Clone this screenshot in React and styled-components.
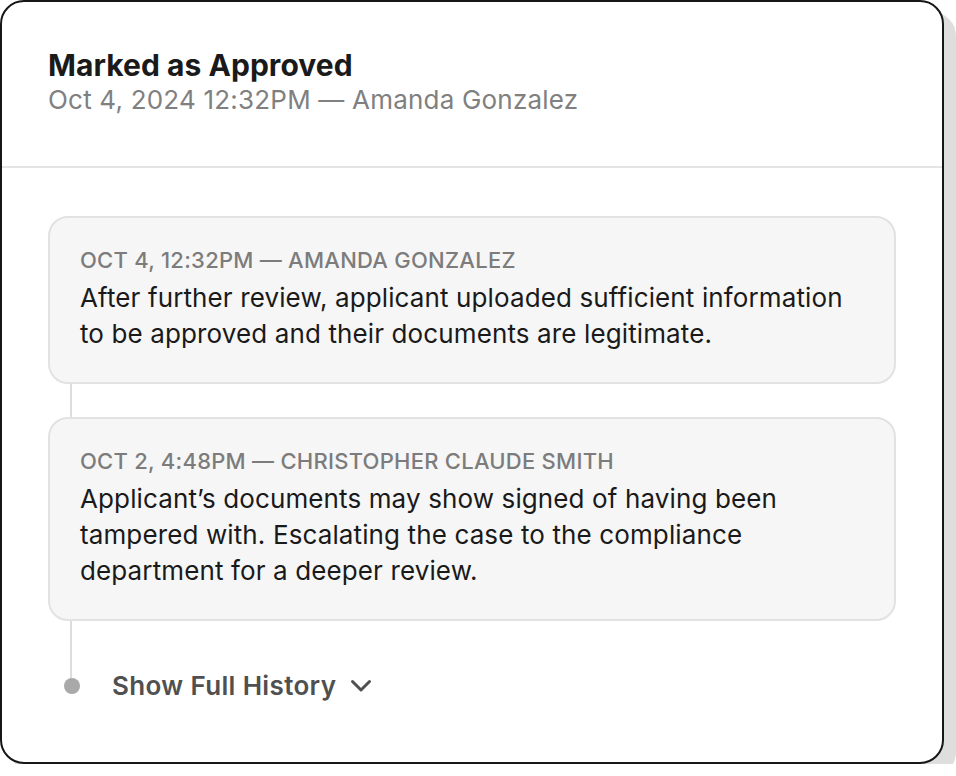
import React from 'react';
import styled, { createGlobalStyle } from 'styled-components';

const GlobalStyle = createGlobalStyle`
  html, body {
    margin: 0;
    padding: 0;
    background: #ffffff;
  }
  body {
    font-family: Inter, "Noto Sans", sans-serif;
  }
`;

const notes = [
  {
    meta: 'Oct 4, 12:32PM — Amanda Gonzalez',
    text: 'After further review, applicant uploaded sufficient information to be approved and their documents are legitimate.',
  },
  {
    meta: 'Oct 2, 4:48PM — Christopher Claude Smith',
    text: 'Applicant’s documents may show signed of having been tampered with. Escalating the case to the compliance department for a deeper review.',
  },
];

const App = () => (
  <>
    <GlobalStyle />
    <Card>
      <Header>
        <Title>Marked as Approved</Title>
        <Subtitle>Oct 4, 2024 12:32PM — Amanda Gonzalez</Subtitle>
      </Header>
      <Body>
        {notes.map((note, i) => (
          <React.Fragment key={i}>
            {i > 0 && <Connector $height={33} />}
            <Note>
              <NoteMeta>{note.meta}</NoteMeta>
              <NoteText>{note.text}</NoteText>
            </Note>
          </React.Fragment>
        ))}
        <Connector $height={57} />
        <HistoryRow>
          <Dot />
          <HistoryButton>
            Show Full History
            <svg width="22" height="14" viewBox="0 0 22 14" fill="none" stroke="currentColor" strokeWidth="3" strokeLinecap="round" strokeLinejoin="round">
              <path d="M2.5 2.5l8.5 8.5 8.5-8.5" />
            </svg>
          </HistoryButton>
        </HistoryRow>
      </Body>
    </Card>
  </>
);

const Card = styled.div`
  box-sizing: border-box;
  width: 944px;
  height: 764px;
  border: 2px solid #161616;
  border-radius: 24px;
  background: #ffffff;
  box-shadow: 12px 12px 0 0 #dedede;
  overflow: hidden;
`;

const Header = styled.div`
  box-sizing: border-box;
  height: 166px;
  padding: 45px 46px 0;
  border-bottom: 2px solid #e4e4e4;
`;

const Title = styled.h1`
  margin: 0;
  font-size: 30px;
  line-height: 36px;
  font-weight: 700;
  color: #1a1a1a;
  letter-spacing: 0.05px;
`;

const Subtitle = styled.div`
  margin-top: 0;
  font-size: 26px;
  line-height: 34px;
  color: #808080;
  letter-spacing: 0.2px;
`;

const Body = styled.div`
  display: flex;
  flex-direction: column;
  padding: 48px 46px 0;
`;

const Connector = styled.div`
  width: 2px;
  height: ${(p) => p.$height}px;
  margin-left: 22px;
  background: #dddddd;
`;

const Note = styled.div`
  box-sizing: border-box;
  border: 2px solid #e2e2e2;
  border-radius: 20px;
  background: #f6f6f6;
  padding: 30px 30px 30px;
`;

const NoteMeta = styled.div`
  font-size: 22px;
  line-height: 24px;
  font-weight: 500;
  text-transform: uppercase;
  color: #7c7c7c;
  letter-spacing: 0.25px;
`;

const NoteText = styled.p`
  margin: 8px 0 0;
  font-size: 26px;
  line-height: 36px;
  color: #1a1a1a;
  letter-spacing: 0.12px;
`;

const HistoryRow = styled.div`
  display: flex;
  align-items: center;
  gap: 32px;
  height: 16px;
  margin-left: 16px;
`;

const Dot = styled.div`
  flex: none;
  width: 16px;
  height: 16px;
  border-radius: 50%;
  background: #a9a9a9;
`;

const HistoryButton = styled.button`
  display: flex;
  align-items: center;
  gap: 14px;
  padding: 0;
  border: none;
  background: none;
  font-family: inherit;
  font-size: 26px;
  line-height: 32px;
  font-weight: 600;
  color: #505050;
  letter-spacing: 0.35px;
  cursor: pointer;
`;

export default App;
